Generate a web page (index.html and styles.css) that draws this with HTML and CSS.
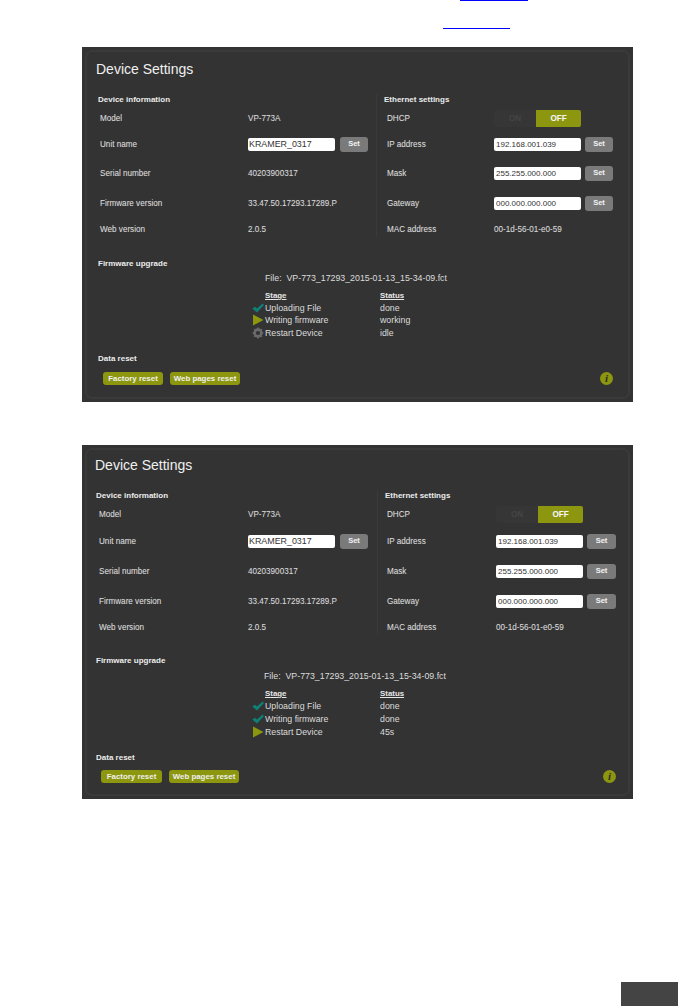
FILE: index.html
```html
<!DOCTYPE html>
<html lang="en">
<head>
<meta charset="utf-8">
<title>Device Settings</title>
<link rel="stylesheet" href="styles.css">
</head>
<body>
<div class="doc-top">
  <a class="link-rule link-one"></a>
  <a class="link-rule link-two"></a>
</div>

<section class="panel panel-a">
  <div class="frame">
    <h1 class="title">Device Settings</h1>
    <div class="cols">
      <div class="col col-left">
        <h2 class="head">Device information</h2>
        <div class="row r1"><span class="label">Model</span><span class="value">VP-773A</span></div>
        <div class="row r2"><span class="label">Unit name</span><span class="field field-name">KRAMER_0317</span><span class="set">Set</span></div>
        <div class="row r3"><span class="label">Serial number</span><span class="value">40203900317</span></div>
        <div class="row r4"><span class="label">Firmware version</span><span class="value">33.47.50.17293.17289.P</span></div>
        <div class="row r5"><span class="label">Web version</span><span class="value">2.0.5</span></div>
      </div>
      <div class="col col-right">
        <h2 class="head">Ethernet settings</h2>
        <div class="row r1"><span class="label">DHCP</span><div class="toggle"><span class="t-on">ON</span><span class="t-off">OFF</span></div></div>
        <div class="row r2"><span class="label">IP address</span><span class="field">192.168.001.039</span><span class="set">Set</span></div>
        <div class="row r3"><span class="label">Mask</span><span class="field">255.255.000.000</span><span class="set">Set</span></div>
        <div class="row r4"><span class="label">Gateway</span><span class="field">000.000.000.000</span><span class="set">Set</span></div>
        <div class="row r5"><span class="label">MAC address</span><span class="value">00-1d-56-01-e0-59</span></div>
      </div>
    </div>
    <h2 class="head head-fw">Firmware upgrade</h2>
    <div class="fw">
      <p class="file">File:&nbsp; VP-773_17293_2015-01-13_15-34-09.fct</p>
      <div class="stages">
        <span class="th">Stage</span><span class="th">Status</span>
        <span class="stage"><svg class="ico" viewBox="0 0 12 12"><path class="ok" d="M0.3 6.6 L3 4.8 L5 6.6 L10.6 1.6 L12 3 L5 10.6 Z"/></svg>Uploading File</span><span>done</span>
        <span class="stage"><svg class="ico" viewBox="0 0 12 12"><path class="run" d="M1 0.5 L11.5 6 L1 11.5 Z"/></svg>Writing firmware</span><span>working</span>
        <span class="stage"><svg class="ico" viewBox="0 0 12 12"><circle class="gear" cx="6" cy="6" r="3.4"/><path class="gear-t" d="M6 .6V11.4M.6 6H11.4M2.2 2.2L9.8 9.8M9.8 2.2L2.2 9.8"/></svg>Restart Device</span><span>idle</span>
      </div>
    </div>
    <h2 class="head head-reset">Data reset</h2>
    <div class="actions">
      <span class="btn btn-factory">Factory reset</span>
      <span class="btn btn-web">Web pages reset</span>
      <span class="info">i</span>
    </div>
  </div>
</section>

<section class="panel panel-b">
  <div class="frame">
    <h1 class="title">Device Settings</h1>
    <div class="cols">
      <div class="col col-left">
        <h2 class="head">Device information</h2>
        <div class="row r1"><span class="label">Model</span><span class="value">VP-773A</span></div>
        <div class="row r2"><span class="label">Unit name</span><span class="field field-name">KRAMER_0317</span><span class="set">Set</span></div>
        <div class="row r3"><span class="label">Serial number</span><span class="value">40203900317</span></div>
        <div class="row r4"><span class="label">Firmware version</span><span class="value">33.47.50.17293.17289.P</span></div>
        <div class="row r5"><span class="label">Web version</span><span class="value">2.0.5</span></div>
      </div>
      <div class="col col-right">
        <h2 class="head">Ethernet settings</h2>
        <div class="row r1"><span class="label">DHCP</span><div class="toggle"><span class="t-on">ON</span><span class="t-off">OFF</span></div></div>
        <div class="row r2"><span class="label">IP address</span><span class="field">192.168.001.039</span><span class="set">Set</span></div>
        <div class="row r3"><span class="label">Mask</span><span class="field">255.255.000.000</span><span class="set">Set</span></div>
        <div class="row r4"><span class="label">Gateway</span><span class="field">000.000.000.000</span><span class="set">Set</span></div>
        <div class="row r5"><span class="label">MAC address</span><span class="value">00-1d-56-01-e0-59</span></div>
      </div>
    </div>
    <h2 class="head head-fw">Firmware upgrade</h2>
    <div class="fw">
      <p class="file">File:&nbsp; VP-773_17293_2015-01-13_15-34-09.fct</p>
      <div class="stages">
        <span class="th">Stage</span><span class="th">Status</span>
        <span class="stage"><svg class="ico" viewBox="0 0 12 12"><path class="ok" d="M0.3 6.6 L3 4.8 L5 6.6 L10.6 1.6 L12 3 L5 10.6 Z"/></svg>Uploading File</span><span>done</span>
        <span class="stage"><svg class="ico" viewBox="0 0 12 12"><path class="ok" d="M0.3 6.6 L3 4.8 L5 6.6 L10.6 1.6 L12 3 L5 10.6 Z"/></svg>Writing firmware</span><span>done</span>
        <span class="stage"><svg class="ico" viewBox="0 0 12 12"><path class="run" d="M1 0.5 L11.5 6 L1 11.5 Z"/></svg>Restart Device</span><span>45s</span>
      </div>
    </div>
    <h2 class="head head-reset">Data reset</h2>
    <div class="actions">
      <span class="btn btn-factory">Factory reset</span>
      <span class="btn btn-web">Web pages reset</span>
      <span class="info">i</span>
    </div>
  </div>
</section>

<div class="page-tab"></div>
</body>
</html>
```
FILE: styles.css
```css
* { box-sizing: border-box; }
html, body { margin: 0; padding: 0; background: #fff; }
body {
  width: 678px;
  height: 1006px;
  overflow: hidden;
  font-family: "Liberation Sans", Arial, sans-serif;
  font-size: 8.15px;
  color: #d8d8d8;
}
.doc-top { height: 47px; display: flex; flex-direction: column; }
.link-rule { display: block; height: 1px; background: #0000ff; }
.link-one { width: 68px; margin-left: 460px; }
.link-two { width: 67px; margin-left: 443px; margin-top: 27px; }

.panel {
  width: 551px;
  margin-left: 82px;
  background: #333;
  padding: 3px;
}
.panel-a { height: 355px; }
.panel-b { height: 354px; margin-top: 43px; }
.frame {
  height: 100%;
  border: 2px solid #3a3a3a;
  border-radius: 7px;
  padding: 10px 0 0 0;
}
.panel-b .frame { padding-top: 8px; }

.title {
  margin: 0 0 0 9px;
  font-size: 14px;
  font-weight: 400;
  line-height: 14px;
  color: #f0f0f0;
}
.panel-b .title { margin-left: 8px; }
.head {
  margin: 0;
  font-size: 8px;
  font-weight: 700;
  line-height: 12px;
  color: #ececec;
}
.cols { display: flex; margin-top: 18px; height: 145px; }
.panel-b .cols { height: 146px; }
.col { display: flex; flex-direction: column; }
.col-left { width: 289px; padding-left: 11px; }
.panel-b .col-left { padding-left: 10px; width: 290px; }
.panel-b .col-left .head { margin-left: -1px; }
.col-right {
  width: 250px;
  margin-bottom: 2px;
  border-left: 1px solid #3a3a3a;
  padding-left: 7px;
}
.head + .row { margin-top: 2px; }
.row {
  flex: none;
  display: flex;
  align-items: center;
  padding-left: 2px;
  font-size: 8.15px;
  text-shadow: 0 0 1px rgba(255, 255, 255, .2);
}
.panel-a .col-right .row { padding-left: 3px; }
.r1 { height: 20px; }
.r2 { height: 32px; }
.r3 { height: 26px; }
.r4 { height: 34px; }
.r5 { height: 18px; }
.panel-b .r2 { height: 34px; }
.panel-b .r3 { height: 26px; }
.panel-b .r4 { height: 34px; }
.label { color: #dcdcdc; }
.col-left .label { width: 148px; }
.col-right .label { width: 107px; }
.panel-b .col-right .label { width: 109px; }
.panel-b .col-left .label { width: 149px; }
.field {
  display: block;
  width: 87px;
  height: 13px;
  line-height: 13px;
  padding-left: 2px;
  background: #fff;
  border-radius: 2px;
  color: #333;
  font-size: 8px;
  text-shadow: none;
}
.field-name { font-size: 8.9px; padding-left: 1px; }
.set {
  width: 28px;
  height: 15px;
  line-height: 14px;
  margin-left: 5px;
  background: #7a7a7a;
  border-radius: 3px;
  color: #eee;
  font-size: 7.5px;
  font-weight: 700;
  text-align: center;
}
.col-right .set { margin-left: 4px; }
.panel-b .col-right .set { width: 29px; }
.toggle { display: flex; width: 87px; height: 17px; }
.t-on {
  width: 42px;
  background: #363636;
  color: #454545;
  border-radius: 2px 0 0 2px;
  font-weight: 700;
  text-align: center;
  line-height: 17px;
  text-shadow: none;
}
.t-off {
  width: 45px;
  background: #8c960e;
  color: #f4f4f4;
  border-radius: 0 2px 2px 0;
  font-weight: 700;
  text-align: center;
  line-height: 17px;
}
.head-fw { margin: 19px 0 0 11px; }
.panel-b .head-fw { margin-left: 9px; }
.fw { margin-left: 178px; }
.file { margin: 2px 0 0 0; line-height: 12px; font-size: 8.8px; color: #dcdcdc; }
.panel-b .file { margin: 3px 0 0 -1px; }
.stages {
  display: grid;
  grid-template-columns: 115px 100px;
  grid-template-rows: 11.5px repeat(3, 12.5px);
  margin-top: 6px;
  font-size: 8.8px;
  line-height: 12.5px;
  color: #dcdcdc;
}
.panel-b .stages { grid-template-rows: 11.5px repeat(3, 13px); }
.th { font-size: 7.9px; font-weight: 700; text-decoration: underline; color: #e6e6e6; }
.stage { position: relative; }
.ico { position: absolute; left: -13px; top: 0; width: 12px; height: 12px; }
.ok { fill: #0f8074; }
.run { fill: #8c960e; }
.gear { fill: none; stroke: #6a6a6a; stroke-width: 2.6; }
.gear-t { fill: none; stroke: #6a6a6a; stroke-width: 1.7; stroke-dasharray: 2 7.2; }
.head-reset { margin: 14px 0 0 11px; }
.panel-b .head-reset { margin: 13px 0 0 9px; }
.actions { display: flex; align-items: center; margin-top: 7px; padding-left: 16px; height: 13px; }
.panel-b .actions { padding-left: 14px; margin-top: 6px; }
.btn {
  height: 13px;
  line-height: 13px;
  background: #8c960e;
  border-radius: 3px;
  color: #f0f0f0;
  font-size: 7.9px;
  font-weight: 700;
  text-align: center;
}
.btn-factory { width: 60px; }
.btn-web { width: 70px; margin-left: 7px; }
.panel-b .btn-factory { width: 61px; }
.info {
  width: 13px;
  height: 13px;
  margin-left: auto;
  margin-right: 15px;
  border-radius: 50%;
  background: #8c960e;
  color: #2c2c2c;
  font-family: "Liberation Serif", serif;
  font-size: 11px;
  font-style: italic;
  font-weight: 700;
  line-height: 13px;
  text-align: center;
}
.panel-b .info { margin-right: 12px; }
.page-tab { width: 57px; height: 24px; background: #444; margin: 183px 0 0 621px; }
```
